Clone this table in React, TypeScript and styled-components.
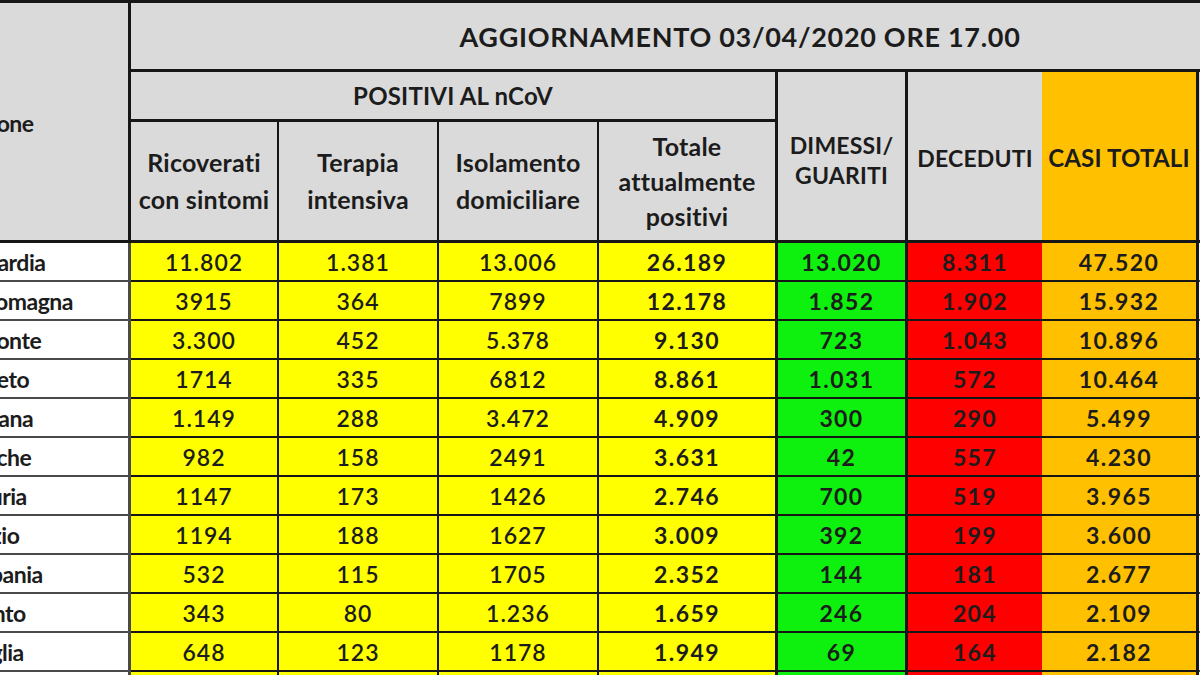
import styled, {createGlobalStyle} from 'styled-components';

const GlobalStyle = createGlobalStyle`
  html, body {
    margin: 0;
    padding: 0;
    background: #dadada;
  }
  body {
    font-family: Lato, "Open Sans", "Liberation Sans", sans-serif;
  }
`;

const Frame = styled.div`
  width: 1200px;
  height: 675px;
  overflow: hidden;
`;

// tabella ritagliata: la colonna Regione esce a sinistra, Tamponi a destra
const Sheet = styled.div`
  display: grid;
  grid-template-columns: 271px 148px 160px 160px 179px 130px 134px 157px 150px;
  grid-template-rows: 72px 50px 121px repeat(12, 39px);
  margin-left: -140px;
  width: max-content;
  color: #1c1c1c;
`;

type CellProps = {
  $col: string;
  $row: string;
  $bg?: string;
  $right?: number;
  $bottom?: number;
  $top?: number;
  $line?: string;
  $shift?: number;
};

const Cell = styled.div<CellProps>`
  grid-column: ${(p) => p.$col};
  grid-row: ${(p) => p.$row};
  box-sizing: border-box;
  display: flex;
  align-items: center;
  justify-content: center;
  text-align: center;
  padding-top: ${(p) => p.$shift ?? 0}px;
  background: ${(p) => p.$bg ?? '#dadada'};
  border-style: solid;
  border-color: ${(p) => p.$line ?? '#161616'};
  border-width: ${(p) => `${p.$top ?? 0}px ${p.$right ?? 0}px ${p.$bottom ?? 0}px 0`};
  white-space: nowrap;
`;

const Title = styled.span`
  font-size: 27px;
  font-weight: 700;
  letter-spacing: 0.7px;
`;

const HeadText = styled.span<{$lh?: number; $size?: number}>`
  font-size: ${(p) => p.$size ?? 23}px;
  font-weight: 700;
  line-height: ${(p) => p.$lh ?? 36}px;
  letter-spacing: 0.2px;
`;

const RegionName = styled.span<{$head?: boolean}>`
  font-size: 23px;
  font-weight: 700;
  letter-spacing: -0.5px;
`;

const Value = styled.span<{$strong?: boolean}>`
  font-size: 23px;
  font-weight: ${(p) => (p.$strong ? 700 : 600)};
  letter-spacing: ${(p) => (p.$strong ? 1.4 : 1)}px;
`;

type Row = {
  regione: string;
  values: string[];
};

const rows: Row[] = [
  {regione: 'Lombardia', values: ['11.802', '1.381', '13.006', '26.189', '13.020', '8.311', '47.520']},
  {regione: 'Emilia-Romagna', values: ['3915', '364', '7899', '12.178', '1.852', '1.902', '15.932']},
  {regione: 'Piemonte', values: ['3.300', '452', '5.378', '9.130', '723', '1.043', '10.896']},
  {regione: 'Veneto', values: ['1714', '335', '6812', '8.861', '1.031', '572', '10.464']},
  {regione: 'Toscana', values: ['1.149', '288', '3.472', '4.909', '300', '290', '5.499']},
  {regione: 'Marche', values: ['982', '158', '2491', '3.631', '42', '557', '4.230']},
  {regione: 'Liguria', values: ['1147', '173', '1426', '2.746', '700', '519', '3.965']},
  {regione: 'Lazio', values: ['1194', '188', '1627', '3.009', '392', '199', '3.600']},
  {regione: 'Campania', values: ['532', '115', '1705', '2.352', '144', '181', '2.677']},
  {regione: 'Trento', values: ['343', '80', '1.236', '1.659', '246', '204', '2.109']},
  {regione: 'Puglia', values: ['648', '123', '1178', '1.949', '69', '164', '2.182']},
  {regione: 'Friuli V. G.', values: ['', '', '', '', '', '', '']},
];

const fills = ['#ffff00', '#ffff00', '#ffff00', '#ffff00', '#0ef00e', '#ff0000', '#ffc000'];
const rights = [2, 2, 2, 3, 3, 0, 3];

function App() {
  return (
    <>
      <GlobalStyle />
      <Frame>
        <Sheet>
          <Cell $col="1" $row="1 / 4" $top={3} $right={3} $bottom={3} $shift={2}>
            <RegionName $head>Regione</RegionName>
          </Cell>
          <Cell $col="2 / 10" $row="1" $top={3} $bottom={3}>
            <Title>AGGIORNAMENTO 03/04/2020 ORE 17.00</Title>
          </Cell>

          <Cell $col="2 / 6" $row="2" $right={3} $bottom={3}>
            <HeadText $size={24}>POSITIVI AL nCoV</HeadText>
          </Cell>
          <Cell $col="6" $row="2 / 4" $right={3} $bottom={3} $shift={8}>
            <HeadText $lh={30}>
              DIMESSI/
              <br />
              GUARITI
            </HeadText>
          </Cell>
          <Cell $col="7" $row="2 / 4" $bottom={3} $shift={4}>
            <HeadText>DECEDUTI</HeadText>
          </Cell>
          <Cell $col="8" $row="2 / 4" $bg="#ffc000" $right={3} $bottom={3} $shift={4}>
            <HeadText $size={24}>CASI TOTALI</HeadText>
          </Cell>
          <Cell $col="9" $row="2 / 4" $bottom={3}>
            <HeadText>TAMPONI</HeadText>
          </Cell>

          <Cell $col="2" $row="3" $right={2} $bottom={3}>
            <HeadText $lh={37} $size={25}>
              Ricoverati
              <br />
              con sintomi
            </HeadText>
          </Cell>
          <Cell $col="3" $row="3" $right={2} $bottom={3}>
            <HeadText $lh={37} $size={25}>
              Terapia
              <br />
              intensiva
            </HeadText>
          </Cell>
          <Cell $col="4" $row="3" $right={2} $bottom={3}>
            <HeadText $lh={37} $size={25}>
              Isolamento
              <br />
              domiciliare
            </HeadText>
          </Cell>
          <Cell $col="5" $row="3" $right={3} $bottom={3}>
            <HeadText $lh={35} $size={25}>
              Totale
              <br />
              attualmente
              <br />
              positivi
            </HeadText>
          </Cell>

          {rows.map((r, i) => {
            const line = `${i + 4}`;
            return [
              <Cell key={`${r.regione}-name`} $col="1" $row={line} $bg="#ffffff" $right={3} $bottom={2} $line="#4a4a4a">
                <RegionName>{r.regione}</RegionName>
              </Cell>,
              ...r.values.map((v, j) => (
                <Cell key={`${r.regione}-${j}`} $col={`${j + 2}`} $row={line} $bg={fills[j]} $right={rights[j]} $bottom={2}>
                  <Value $strong={j > 2}>{v}</Value>
                </Cell>
              )),
              <Cell key={`${r.regione}-tamponi`} $col="9" $row={line} $bg="#ffffff" $bottom={2} $line="#4a4a4a" />,
            ];
          })}
        </Sheet>
      </Frame>
    </>
  );
}

export default App;
